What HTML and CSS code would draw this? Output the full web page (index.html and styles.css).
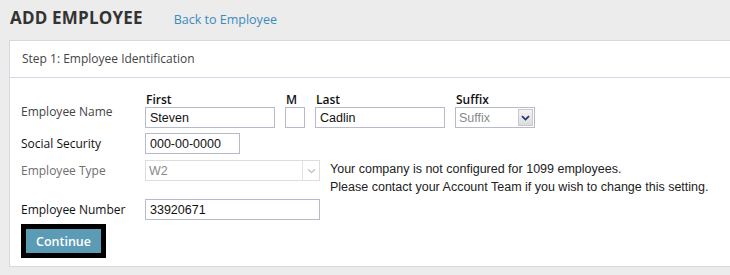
FILE: index.html
```
<!DOCTYPE html>
<html lang="en">
<head>
    <meta charset="UTF-8">
    <title>Add Employee</title>
    <link rel="stylesheet" href="styles.css">
</head>
<body>

    <div class="page-head">
        <h1>ADD EMPLOYEE</h1>
        <a href="#" class="back-link">Back to Employee</a>
    </div>

    <div class="panel">
        <div class="panel-title">Step 1: Employee Identification</div>

        <form class="panel-body">
            <!-- Name -->
            <div class="form-row">
                <label class="row-label name-label">Employee Name</label>
                <div class="name-fields">
                    <div class="field">
                        <span class="field-label">First</span>
                        <input type="text" class="txt w-first" value="Steven">
                    </div>
                    <div class="field">
                        <span class="field-label">M</span>
                        <input type="text" class="txt w-mid" value="">
                    </div>
                    <div class="field">
                        <span class="field-label">Last</span>
                        <input type="text" class="txt w-last" value="Cadlin">
                    </div>
                    <div class="field">
                        <span class="field-label">Suffix</span>
                        <div class="select-box w-suffix">
                            <span class="select-text placeholder">Suffix</span>
                            <span class="select-arrow">
                                <svg width="9" height="6" viewBox="0 0 9 6"><path d="M1 1.2 L4.5 4.6 L8 1.2" fill="none" stroke="#1f3a6e" stroke-width="1.8"/></svg>
                            </span>
                        </div>
                    </div>
                </div>
            </div>

            <!-- SSN -->
            <div class="form-row">
                <label class="row-label dark">Social Security</label>
                <input type="text" class="txt w-ssn" value="000-00-0000">
            </div>

            <!-- Type -->
            <div class="form-row top">
                <label class="row-label muted">Employee Type</label>
                <div class="select-box w-type disabled">
                    <span class="select-text">W2</span>
                    <span class="select-arrow">
                        <svg width="9" height="6" viewBox="0 0 9 6"><path d="M1 1.2 L4.5 4.6 L8 1.2" fill="none" stroke="#c4c4c4" stroke-width="1.4"/></svg>
                    </span>
                </div>
                <p class="type-note">Your company is not configured for 1099 employees.<br>Please contact your Account Team if you wish to change this setting.</p>
            </div>

            <!-- Number -->
            <div class="form-row">
                <label class="row-label dark">Employee Number</label>
                <input type="text" class="txt w-number" value="33920671">
            </div>

            <div class="button-row">
                <button type="button" class="continue-btn">Continue</button>
            </div>
        </form>
    </div>

</body>
</html>
```

FILE: styles.css
```
body {
    margin: 0;
    padding: 0;
    background-color: #ececec;
    font-family: 'Open Sans', sans-serif;
    overflow: hidden;
}

.page-head {
    display: flex;
    align-items: baseline;
    height: 40px;
    padding-left: 10px;
    box-sizing: border-box;
    padding-top: 6px;
}

h1 {
    margin: 0;
    font-size: 17px;
    font-weight: 700;
    color: #333;
    letter-spacing: 0.2px;
}

.back-link {
    margin-left: 31px;
    font-size: 12.5px;
    color: #3a8bbd;
    text-decoration: none;
}

.panel {
    margin-left: 9px;
    background: #fff;
    border: 1px solid #d9d7e6;
    border-right: none;
    height: 227px;
    box-sizing: border-box;
}

.panel-title {
    height: 36px;
    line-height: 35px;
    padding-left: 12px;
    font-size: 12px;
    color: #444;
    border-bottom: 1px solid #d9d7e6;
}

.panel-body {
    padding: 15px 0 0 11px;
    font-family: 'Liberation Sans', sans-serif;
}

.form-row {
    display: flex;
    align-items: center;
}

.form-row + .form-row {
    margin-top: 5px;
}

.form-row.top {
    align-items: flex-start;
    margin-top: 6px;
}

.form-row.top + .form-row {
    margin-top: 3px;
}

.row-label {
    width: 124px;
    flex-shrink: 0;
    font-family: 'Open Sans', sans-serif;
    font-size: 12px;
    color: #444;
    line-height: 21px;
}

.row-label.dark {
    color: #111;
}

.row-label.muted {
    color: #6e6e6e;
}

.name-label {
    padding-top: 2px;
}

.name-fields {
    display: flex;
    gap: 10px;
}

.field {
    display: flex;
    flex-direction: column;
}

.field-label {
    font-family: 'Open Sans', sans-serif;
    font-size: 12px;
    font-weight: 600;
    color: #111;
    line-height: 14px;
    padding-left: 1px;
}

.txt {
    height: 21px;
    box-sizing: border-box;
    margin: 0;
    border: 1px solid #b9b9cc;
    padding: 0 4px;
    font-family: 'Liberation Sans', sans-serif;
    font-size: 12.5px;
    color: #111;
    outline: none;
}

.w-first { width: 130px; }
.w-mid { width: 20px; }
.w-last { width: 130px; }
.w-ssn { width: 95px; }
.w-number { width: 175px; }

.select-box {
    position: relative;
    height: 21px;
    box-sizing: border-box;
    border: 1px solid #b9b9cc;
    display: flex;
    align-items: center;
    font-size: 12.5px;
}

.w-suffix { width: 80px; }
.w-type { width: 175px; }

.select-text {
    padding-left: 3px;
    color: #111;
}

.select-text.placeholder {
    color: #8a8a8a;
}

.select-arrow {
    position: absolute;
    right: 1px;
    top: 1px;
    bottom: 1px;
    width: 15px;
    background: linear-gradient(#f4f4f4, #dcdcdc);
    border: 1px solid #c8c8d0;
    box-sizing: border-box;
    display: flex;
    align-items: center;
    justify-content: center;
}

.select-box.disabled {
    border-color: #dcdce4;
}

.select-box.disabled .select-text {
    color: #8a8a8a;
}

.select-box.disabled .select-arrow {
    background: #fff;
    border: none;
    border-left: 1px solid #e2e2e2;
    top: 0;
    bottom: 0;
    right: 0;
    width: 17px;
}

.type-note {
    margin: 0 0 0 10px;
    font-size: 12.5px;
    line-height: 18px;
    color: #222;
}

.button-row {
    margin-top: 4px;
}

.continue-btn {
    display: block;
    width: 85px;
    height: 34px;
    box-sizing: border-box;
    border: 5px solid #000;
    background: #5c9bb6;
    color: #fff;
    font-family: 'Open Sans', sans-serif;
    font-size: 12.5px;
    font-weight: 600;
    padding: 0;
    cursor: pointer;
}
```
